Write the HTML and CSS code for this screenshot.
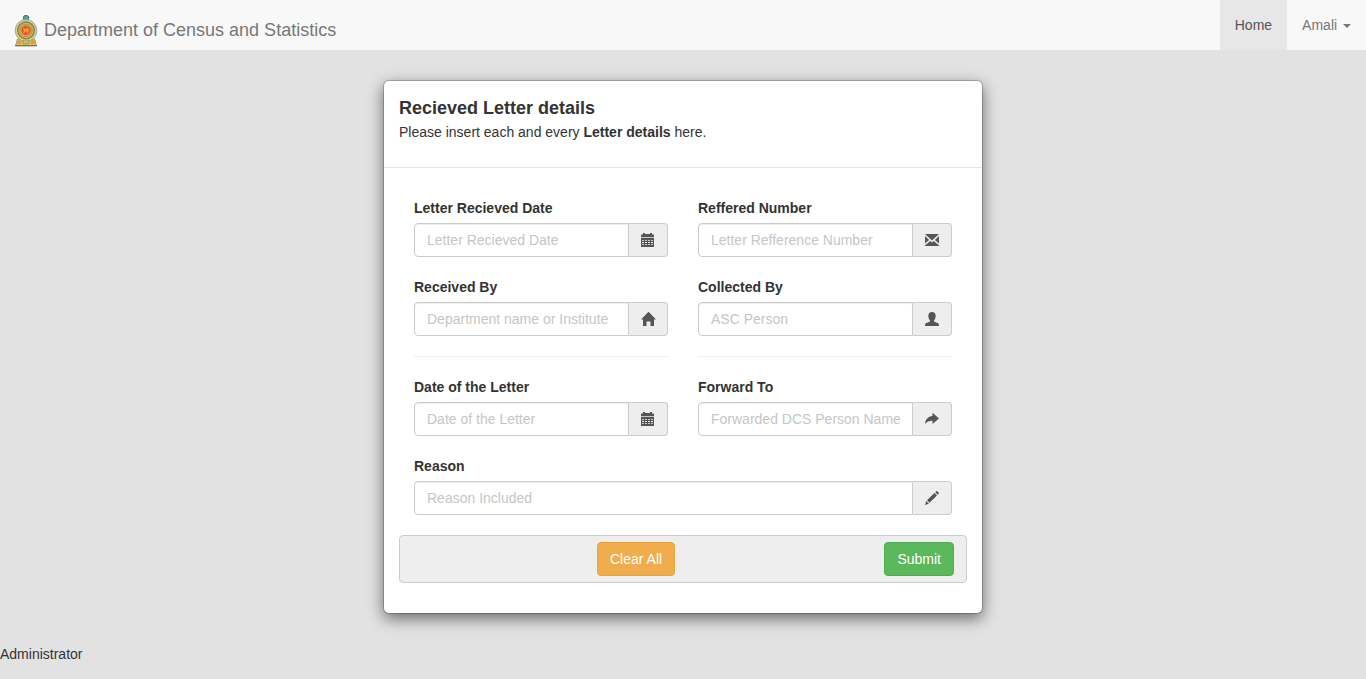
FILE: index.html
```html
<!DOCTYPE html>
<html lang="en">
<head>
<meta charset="utf-8">
<title>Department of Census and Statistics</title>
<link rel="stylesheet" href="styles.css">
</head>
<body>
<svg class="sprite" width="0" height="0">
  <symbol id="calendar" viewBox="0 0 14 14">
    <path d="M0 1.400h2V0h2v1h5V0h2v1.400h2V4.300H0z"/>
    <path fill-rule="evenodd" d="M0 5h13v9H0zM1 7v.8h2V7zM4 7v.8h2V7zM7 7v.8h2V7zM10 7v.8h2V7zM1 9.100v.8h2v-.8zM4 9.100v.8h2v-.8zM7 9.100v.8h2v-.8zM10 9.100v.8h2v-.8zM1 11.200v.8h2v-.8zM4 11.200v.8h2v-.8zM7 11.200v.8h2v-.8zM10 11.200v.8h2v-.8z"/>
  </symbol>
  <symbol id="envelope" viewBox="0 0 14 14">
    <path d="M0 1h14L7 7.500zM0 3l4.100 3.900L0 10.400zM14 3L9.900 6.900l4.100 3.500zM5.200 8L7 9.600 8.800 8l5.200 4.500v.5H0v-.5z"/>
  </symbol>
  <symbol id="home" viewBox="0 0 14 14">
    <path d="M7.500-.3L15 7.500h-2V14H9.500V9.500h-4V14H2V7.500H0z"/>
  </symbol>
  <symbol id="user" viewBox="0 0 14 14">
    <path d="M7 0c2.400 0 3.700 1.300 3.700 3.800 0 1.900-.6 3.500-1.700 4.600v1c.8.500 2.600.9 3.800 1.600.9.500 1.200 1.200 1.200 3H0c0-1.800.3-2.500 1.200-3C2.400 10.300 4.200 9.900 5 9.400v-1C3.900 7.300 3.300 5.700 3.300 3.800 3.300 1.300 4.600 0 7 0z"/>
  </symbol>
  <symbol id="share" viewBox="0 0 14 14">
    <path d="M7.500.8L14 6.400 7.500 12V8.800C4.300 8.700 2 9.400 0 12 .4 7.300 3 4.400 7.500 4z"/>
  </symbol>
  <symbol id="pencil" viewBox="0 0 14 14">
    <path d="M11.200.3q.6-.5 1.100 0l1.400 1.400q.5.500 0 1.100l-1 1-2.500-2.500zM9.500 2l2.500 2.500-7.500 7.300L2 9.300zM1.300 10.100l2.600 2.600L0 14z"/>
  </symbol>
</svg>

<nav class="navbar">
  <a class="brand">
    <svg class="emblem" viewBox="0 0 24 33">
      <path d="M3.500 25h17l2 7h-21z" fill="#edc65d" stroke="#5f93a0" stroke-width=".8"/>
      <circle cx="12" cy="4" r="2.700" fill="#5d9b8b" stroke="#367b98"/>
      <ellipse cx="12" cy="16.500" rx="10.800" ry="11" fill="#e8cc78" stroke="#79a3aa" stroke-width=".8"/>
      <circle cx="12" cy="16.300" r="8.300" fill="#dcb95f" stroke="#7a8358" stroke-width="1.400"/>
      <circle cx="12" cy="16.300" r="6.200" fill="#d6a646" stroke="#a58b4e" stroke-width=".8"/>
      <circle cx="12" cy="16.300" r="4.600" fill="#e3532e"/>
      <path d="M9 14l2 1 3-1 1 2-1 3h-1l-1-2-2 2H9l1-2z" fill="#f5a530"/>
      <circle cx="5.300" cy="28.300" r="2.300" fill="#e89b2e"/>
      <circle cx="18.700" cy="28.300" r="2.300" fill="#e89b2e"/>
      <path d="M9 26h6v4H9z" fill="#d3b95d" stroke="#6b8e70" stroke-width=".6"/>
      <path d="M1 31.500h22" stroke="#3688a5"/>
    </svg>
    <span>Department of Census and Statistics</span>
  </a>
  <div class="nav-links">
    <a class="nav-link active">Home</a>
    <a class="nav-link">Amali <b class="caret"></b></a>
  </div>
</nav>

<main class="dialog">
  <header class="dialog-header">
    <h4 class="dialog-title">Recieved Letter details</h4>
    <p class="dialog-note">Please insert each and every <b>Letter details</b> here.</p>
  </header>
  <form class="dialog-body">
    <div class="fields">
      <div class="field"><label>Letter Recieved Date</label>
        <div class="input-group"><input class="control" placeholder="Letter Recieved Date"><span class="addon"><svg class="icon"><use href="#calendar"/></svg></span></div></div>
      <div class="field"><label>Reffered Number</label>
        <div class="input-group"><input class="control" placeholder="Letter Refference Number"><span class="addon"><svg class="icon"><use href="#envelope"/></svg></span></div></div>
      <div class="field"><label>Received By</label>
        <div class="input-group"><input class="control" placeholder="Department name or Institute"><span class="addon"><svg class="icon"><use href="#home"/></svg></span></div></div>
      <div class="field"><label>Collected By</label>
        <div class="input-group"><input class="control" placeholder="ASC Person"><span class="addon"><svg class="icon"><use href="#user"/></svg></span></div></div>
      <hr class="rule"><hr class="rule">
      <div class="field"><label>Date of the Letter</label>
        <div class="input-group"><input class="control" placeholder="Date of the Letter"><span class="addon"><svg class="icon"><use href="#calendar"/></svg></span></div></div>
      <div class="field"><label>Forward To</label>
        <div class="input-group"><input class="control" placeholder="Forwarded DCS Person Name"><span class="addon"><svg class="icon"><use href="#share"/></svg></span></div></div>
      <div class="field wide"><label>Reason</label>
        <div class="input-group"><input class="control" placeholder="Reason Included"><span class="addon"><svg class="icon"><use href="#pencil"/></svg></span></div></div>
    </div>
    <div class="actions">
      <button type="reset" class="btn btn-clear">Clear All</button>
      <button type="button" class="btn btn-submit">Submit</button>
    </div>
  </form>
</main>
<div class="role">Administrator</div>
</body>
</html>
```
FILE: styles.css
```css
* { box-sizing: border-box; }
body {
  margin: 0;
  background: #e2e2e2;
  color: #333;
  font: 14px/20px "Liberation Sans", Arial, sans-serif;
}
.sprite { display: block; }
.navbar {
  display: flex;
  justify-content: space-between;
  height: 50px;
  background: #f8f8f8;
}
.brand {
  display: flex;
  align-items: flex-start;
  gap: 6px;
  padding: 14px 0 0 14px;
  color: #777;
  font-size: 18px;
}
.brand span { padding-top: 6px; }
.emblem { width: 24px; height: 33px; }
.nav-links { display: flex; }
.nav-link { padding: 15px; color: #777; }
.nav-link.active { background: #e7e7e7; color: #555; }
.caret {
  display: inline-block;
  margin-left: 2px;
  vertical-align: middle;
  border-top: 4px solid #777;
  border-left: 4px solid transparent;
  border-right: 4px solid transparent;
}
.dialog {
  width: 600px;
  height: 534px;
  margin: 30px auto;
  background: #fff;
  background-clip: padding-box;
  border: 1px solid rgba(0, 0, 0, .2);
  border-radius: 6px;
  box-shadow: 0 5px 15px rgba(0, 0, 0, .5);
}
.dialog-header {
  height: 87px;
  padding: 15px 15px 0;
  border-bottom: 1px solid #e5e5e5;
}
.dialog-title { margin: 0; font-size: 18px; line-height: 25.700px; }
.dialog-note { margin: 0; }
.dialog-body { padding: 30px 15px; }
.fields {
  display: grid;
  grid-template-columns: 1fr 1fr;
  gap: 20px 30px;
  padding: 0 15px;
}
.wide { grid-column: 1 / -1; }
label { display: block; margin-bottom: 5px; font-weight: 700; }
.input-group { display: flex; height: 34px; }
.control {
  flex: 1;
  min-width: 0;
  padding: 6px 12px;
  border: 1px solid #ccc;
  border-radius: 4px 0 0 4px;
  background: #fff;
  box-shadow: inset 0 1px 1px rgba(0, 0, 0, .075);
  color: #555;
  font: inherit;
}
.control::placeholder { color: #c6c6c6; opacity: 1; }
.addon {
  display: flex;
  align-items: center;
  justify-content: center;
  width: 39px;
  border: 1px solid #ccc;
  border-left: 0;
  border-radius: 0 4px 4px 0;
  background: #eee;
  color: #555;
}
.icon { width: 14px; height: 14px; fill: currentColor; overflow: visible; }
.icon, symbol { overflow: visible; }
.rule { width: 100%; height: 1px; margin: 0; border: 0; background: #eee; }
.actions {
  display: flex;
  justify-content: space-between;
  height: 48px;
  margin-top: 20px;
  padding: 6px 12px 6px 197px;
  border: 1px solid #ccc;
  border-radius: 4px;
  background: #eee;
}
.btn {
  height: 34px;
  padding: 6px 12px;
  border: 1px solid;
  border-radius: 4px;
  color: #fff;
  font: inherit;
}
.btn-clear { background: #f0ad4e; border-color: #eea236; }
.btn-submit { background: #5cb85c; border-color: #4cae4c; }
```
